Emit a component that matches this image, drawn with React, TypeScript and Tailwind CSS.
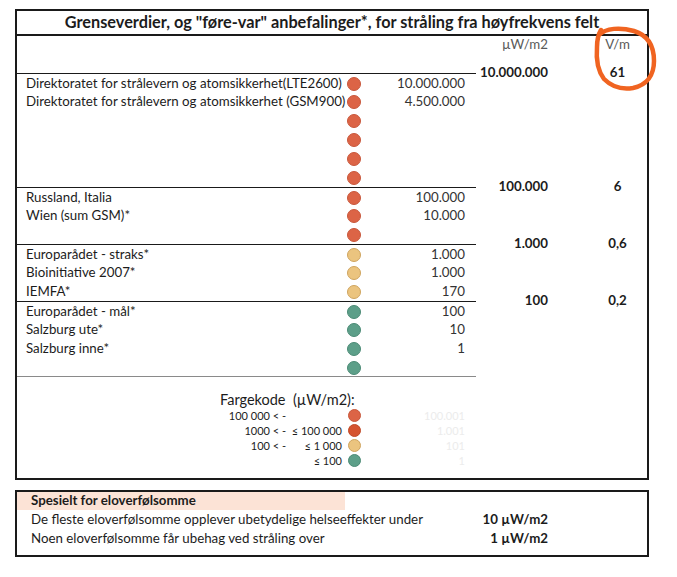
type Dot = 'red' | 'yellow' | 'teal' | 'deep';

type Row = {
  label?: string;
  value?: string;
  color: Dot;
  top?: boolean;
};

const rows: Row[] = [
  { label: 'Direktoratet for strålevern og atomsikkerhet(LTE2600)', value: '10.000.000', color: 'red', top: true },
  { label: 'Direktoratet for strålevern og atomsikkerhet (GSM900)', value: '4.500.000', color: 'red' },
  { color: 'red' },
  { color: 'red' },
  { color: 'red' },
  { color: 'red' },
  { label: 'Russland, Italia', value: '100.000', color: 'red', top: true },
  { label: 'Wien (sum GSM)*', value: '10.000', color: 'red' },
  { color: 'red' },
  { label: 'Europarådet - straks*', value: '1.000', color: 'yellow', top: true },
  { label: 'Bioinitiative 2007*', value: '1.000', color: 'yellow' },
  { label: 'IEMFA*', value: '170', color: 'yellow' },
  { label: 'Europarådet - mål*', value: '100', color: 'teal', top: true },
  { label: 'Salzburg ute*', value: '10', color: 'teal' },
  { label: 'Salzburg inne*', value: '1', color: 'teal' },
  { color: 'teal' },
];

const legend: { from?: string; to: string; color: Dot; faint: string }[] = [
  { from: '100 000 < -', to: '', color: 'red', faint: '100.001' },
  { from: '1000 < -', to: '≤ 100 000', color: 'deep', faint: '1.001' },
  { from: '100 < -', to: '≤ 1 000', color: 'yellow', faint: '101' },
  { to: '≤ 100', color: 'teal', faint: '1' },
];

function Circle({ color, small }: { color: Dot; small?: boolean }) {
  return (
    <span
      className={[
        'block shrink-0 rounded-full border',
        small ? 'w-[13px] h-[13px] mx-[0.5px]' : 'w-[14px] h-[14px]',
        color === 'red' && 'bg-[#dc6446] border-[#c8573b]',
        color === 'deep' && 'bg-[#d5532f] border-[#c04a29]',
        color === 'yellow' && 'bg-[#ebc47f] border-[#cfa45e]',
        color === 'teal' && 'bg-[#5d9f89] border-[#4b8a75]',
      ]
        .filter(Boolean)
        .join(' ')}
    />
  );
}

export default function App() {
  return (
    <div className="relative w-[677px] h-[577px] bg-white text-[#1c1c1c] font-['Lato','Liberation_Sans',sans-serif] pt-[9px]">
      {/* main table */}
      <div className="ml-[15px] w-[634px] border-2 border-[#1a1a1a]">
        <div className="h-[25px] border-b-2 border-[#1a1a1a] flex items-center justify-center text-[16.3px] font-bold leading-none">
          Grenseverdier, og "føre-var" anbefalinger*, for stråling fra høyfrekvens felt
        </div>

        <div className="grid grid-cols-[459px_72px_1fr] grid-rows-[18px_19px_repeat(16,19px)] text-[13.3px] leading-none">
          <div className="col-start-2 row-start-1 flex items-center justify-end text-[#5a5a5a]">µW/m2</div>
          <div className="col-start-3 row-start-1 flex items-center justify-center pl-[40px] text-[#5a5a5a]">V/m</div>

          {rows.map((r, i) => (
            <div
              key={i}
              style={{ gridRowStart: i + 3 }}
              className={[
                'col-start-1 flex items-center pr-[11px] pt-[1px]',
                r.top && 'border-t border-[#1a1a1a]',
                i === rows.length - 1 && 'border-b border-[#8a8a8a]',
              ]
                .filter(Boolean)
                .join(' ')}
            >
              <span className="flex-1 pl-[9px] whitespace-nowrap">{r.label}</span>
              <Circle color={r.color} />
              <span className="w-[104px] text-right text-[#333]">{r.value}</span>
            </div>
          ))}

          <div className="col-start-2 row-start-2 row-span-2 flex items-center justify-end font-bold">10.000.000</div>
          <div className="col-start-3 row-start-2 row-span-2 flex items-center justify-center pl-[40px] font-bold">61</div>
          <div className="col-start-2 row-start-8 row-span-2 flex items-center justify-end font-bold">100.000</div>
          <div className="col-start-3 row-start-8 row-span-2 flex items-center justify-center pl-[40px] font-bold">6</div>
          <div className="col-start-2 row-start-11 row-span-2 flex items-center justify-end font-bold">1.000</div>
          <div className="col-start-3 row-start-11 row-span-2 flex items-center justify-center pl-[40px] font-bold">0,6</div>
          <div className="col-start-2 row-start-14 row-span-2 flex items-center justify-end font-bold">100</div>
          <div className="col-start-3 row-start-14 row-span-2 flex items-center justify-center pl-[40px] font-bold">0,2</div>
        </div>

        {/* colour key */}
        <div className="w-[459px] pt-[15px] pb-[10px]">
          <div className="h-[16px] pl-[203px] text-[14.5px] leading-[16px] whitespace-nowrap">Fargekode&nbsp; (µW/m2):</div>
          {legend.map((l, i) => (
            <div key={i} className="h-[15px] flex items-center justify-end pr-[11px] text-[11px] leading-none whitespace-nowrap">
              <span className="text-right">{l.from}</span>
              <span className="w-[56px] text-right">{l.to}</span>
              <span className="w-[5px]" />
              <Circle color={l.color} small />
              <span className="w-[104px] text-right text-[#ececec]">{l.faint}</span>
            </div>
          ))}
        </div>
      </div>

      {/* sensitive box */}
      <div className="mt-[10px] ml-[15px] w-[634px] border-2 border-[#1a1a1a] pb-[7px] text-[13.3px] leading-none">
        <div className="h-[18px] w-[328px] bg-[#fce3d6] flex items-center pl-[14px] font-bold">Spesielt for eloverfølsomme</div>
        <div className="h-[19px] flex items-center pr-[99px]">
          <span className="flex-1 pl-[14px]">De fleste eloverfølsomme opplever ubetydelige helseeffekter under</span>
          <span className="font-bold">10 µW/m2</span>
        </div>
        <div className="h-[19px] flex items-center pr-[99px]">
          <span className="flex-1 pl-[14px]">Noen eloverfølsomme får ubehag ved stråling over</span>
          <span className="font-bold">1 µW/m2</span>
        </div>
      </div>

      {/* hand-drawn marker */}
      <svg className="absolute left-[590px] top-[22px]" width="72" height="72" viewBox="0 0 72 72" fill="none">
        <path
          d="M9 13 C16 6 30 5 44 9 C57 13 64 23 64 39 C64 53 57 63 43 66 C31 68 21 64 14 57 C8 49 6 37 7 25 C7 19 8 13 11 8"
          stroke="#f06421"
          strokeWidth="4.5"
          strokeLinecap="round"
          strokeLinejoin="round"
        />
      </svg>
    </div>
  );
}
